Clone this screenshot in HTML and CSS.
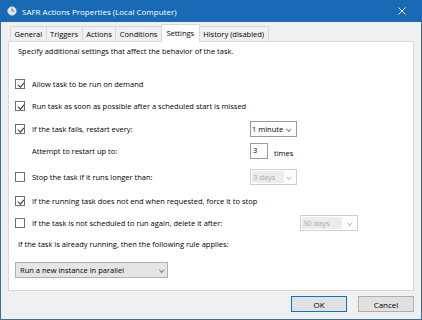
FILE: index.html
```html
<!DOCTYPE html>
<html>
<head>
<meta charset="utf-8">
<link rel="stylesheet" href="styles.css">
</head>
<body>
<div class="window">
  <div class="titlebar">
    <svg class="appicon" width="10" height="10" viewBox="0 0 10 10"><circle cx="5" cy="5" r="4.3" fill="#e8e8e8" stroke="#b8c4d0" stroke-width="0.8"/><path d="M5 2.3 V5 H7.2" fill="none" stroke="#5a6a7a" stroke-width="0.9"/></svg>
    <span class="title">SAFR Actions Properties (Local Computer)</span>
    <svg class="close" width="8" height="8" viewBox="0 0 8 8"><path d="M0.5 0.5 L7.5 7.5 M7.5 0.5 L0.5 7.5" stroke="#fff" stroke-width="0.9"/></svg>
  </div>
  <div class="frame">
    <div class="tabs">
      <div class="tab">General</div>
      <div class="tab">Triggers</div>
      <div class="tab">Actions</div>
      <div class="tab">Conditions</div>
      <div class="tab active">Settings</div>
      <div class="tab">History (disabled)</div>
    </div>
    <div class="panel">
      <p class="intro">Specify additional settings that affect the behavior of the task.</p>
      <div class="row r1"><span class="cb on"></span><span class="lbl">Allow task to be run on demand</span></div>
      <div class="row r2"><span class="cb on"></span><span class="lbl">Run task as soon as possible after a scheduled start is missed</span></div>
      <div class="row r3"><span class="cb on"></span><span class="lbl col">If the task fails, restart every:</span><span class="combo w47">1 minute<i class="chev"></i></span></div>
      <div class="row r4 indent"><span class="lbl col">Attempt to restart up to:</span><span class="spin">3</span><span class="unit">times</span></div>
      <div class="row r5"><span class="cb"></span><span class="lbl col">Stop the task if it runs longer than:</span><span class="combo w47 dis"><b>3 days</b><i class="chev"></i></span></div>
      <div class="row r6"><span class="cb on"></span><span class="lbl">If the running task does not end when requested, force it to stop</span></div>
      <div class="row r7"><span class="cb"></span><span class="lbl col3">If the task is not scheduled to run again, delete it after:</span><span class="combo w58 dis"><b>30 days</b><i class="chev"></i></span></div>
      <p class="row r8 plain">If the task is already running, then the following rule applies:</p>
      <div class="row r9"><span class="combo big">Run a new instance in parallel<i class="chev"></i></span></div>
    </div>
    <div class="buttons">
      <button class="btn default">OK</button>
      <button class="btn">Cancel</button>
    </div>
  </div>
</div>
</body>
</html>
```
FILE: styles.css
```css
* { box-sizing: border-box; margin: 0; padding: 0; }
html, body { width: 422px; height: 320px; overflow: hidden; }
body {
  font-family: "Open Sans", "Noto Sans", sans-serif;
  font-size: 7.5px;
  color: #000;
  background: #f0f0f0;
}
.window { width: 422px; height: 320px; display: flex; flex-direction: column; }
.titlebar {
  height: 22px;
  flex: 0 0 22px;
  background: #1a69b4;
  color: #fff;
  display: flex;
  align-items: center;
  padding: 0 16px 0 7px;
}
.appicon { margin-right: 5px; }
.title { font-size: 8px; flex: 1; }
.frame {
  flex: 1;
  border: 1px solid #3b6c9e;
  border-top: none;
  padding: 0 7px;
  display: flex;
  flex-direction: column;
  background: #f0f0f0;
}
.tabs {
  display: flex;
  align-items: flex-end;
  height: 19px;
  flex: 0 0 19px;
  padding-left: 2px;
  position: relative;
  z-index: 1;
}
.tab {
  height: 15px;
  line-height: 14px;
  padding: 0 3.5px;
  border: 1px solid #d9d9d9;
  border-bottom: none;
  margin-right: -1px;
  background: #f0f0f0;
  white-space: nowrap;
}
.tab.active {
  height: 18px;
  line-height: 16px;
  background: #fff;
  margin-bottom: -1px;
  padding: 0 4.5px;
  position: relative;
}
.panel {
  height: 250px;
  flex: 0 0 250px;
  background: #fff;
  border: 1px solid #d9d9d9;
  padding: 3px 0 0 6px;
  display: flex;
  flex-direction: column;
}
.intro { height: 12px; line-height: 12px; padding-left: 3px; }
.row { display: flex; align-items: center; height: 14px; white-space: nowrap; }
.r1 { margin-top: 20px; }
.r2 { margin-top: 8px; }
.r3 { margin-top: 9px; }
.r4 { margin-top: 8px; }
.r5 { margin-top: 12px; }
.r6 { margin-top: 10px; }
.r7 { margin-top: 8px; }
.r8 { margin-top: 7px; padding-left: 3px; }
.r9 { margin-top: 11px; height: 16px; }
.indent { padding-left: 17px; }
.cb {
  width: 10px; height: 10px;
  border: 1px solid #6f6f6f;
  background: #fff;
  margin-right: 7px;
  flex: 0 0 10px;
  position: relative;
}
.cb.on::after {
  content: "";
  position: absolute;
  left: 2.5px; top: 0.5px;
  width: 2.5px; height: 5px;
  border: solid #333;
  border-width: 0 1px 1px 0;
  transform: rotate(40deg);
}
.col { width: 218px; }
.col3 { width: 268px; }
.combo {
  position: relative;
  height: 16px;
  border: 1px solid #9a9a9a;
  background: #fff;
  display: flex;
  align-items: center;
  padding-left: 1px;
}
.w47 { width: 47px; }
.w58 { width: 58px; }
.combo.dis { border-color: #d0d0d0; color: #a8a8a8; padding-left: 1px; }
.combo.dis b { font-weight: normal; background: #ececec; height: 12px; line-height: 12px; padding: 0 1px; width: 32px; }
.w58 b { width: 40px !important; }
.combo.big { width: 153px; background: #e5e5e5; border-color: #b0b0b0; padding-left: 4px; }
.chev {
  position: absolute;
  right: 6px; top: 4.5px;
  width: 3.5px; height: 3.5px;
  border: solid #7a7a7a;
  border-width: 0 1px 1px 0;
  transform: rotate(45deg);
}
.big .chev { right: 4px; }
.dis .chev { border-color: #c0c0c0; }
.spin {
  width: 18px; height: 16px;
  border: 1px solid #9a9a9a;
  background: #fff;
  padding-left: 2px;
  line-height: 13px;
}
.unit { margin-left: 6px; margin-top: 4px; }
.buttons {
  display: flex;
  justify-content: flex-end;
  gap: 11px;
  margin-top: 5px;
}
.btn {
  font-family: inherit;
  font-size: 8px;
  width: 56px;
  height: 16px;
  background: #e1e1e1;
  border: 1px solid #adadad;
  color: #000;
}
.btn.default { border-color: #0078d7; }
```
